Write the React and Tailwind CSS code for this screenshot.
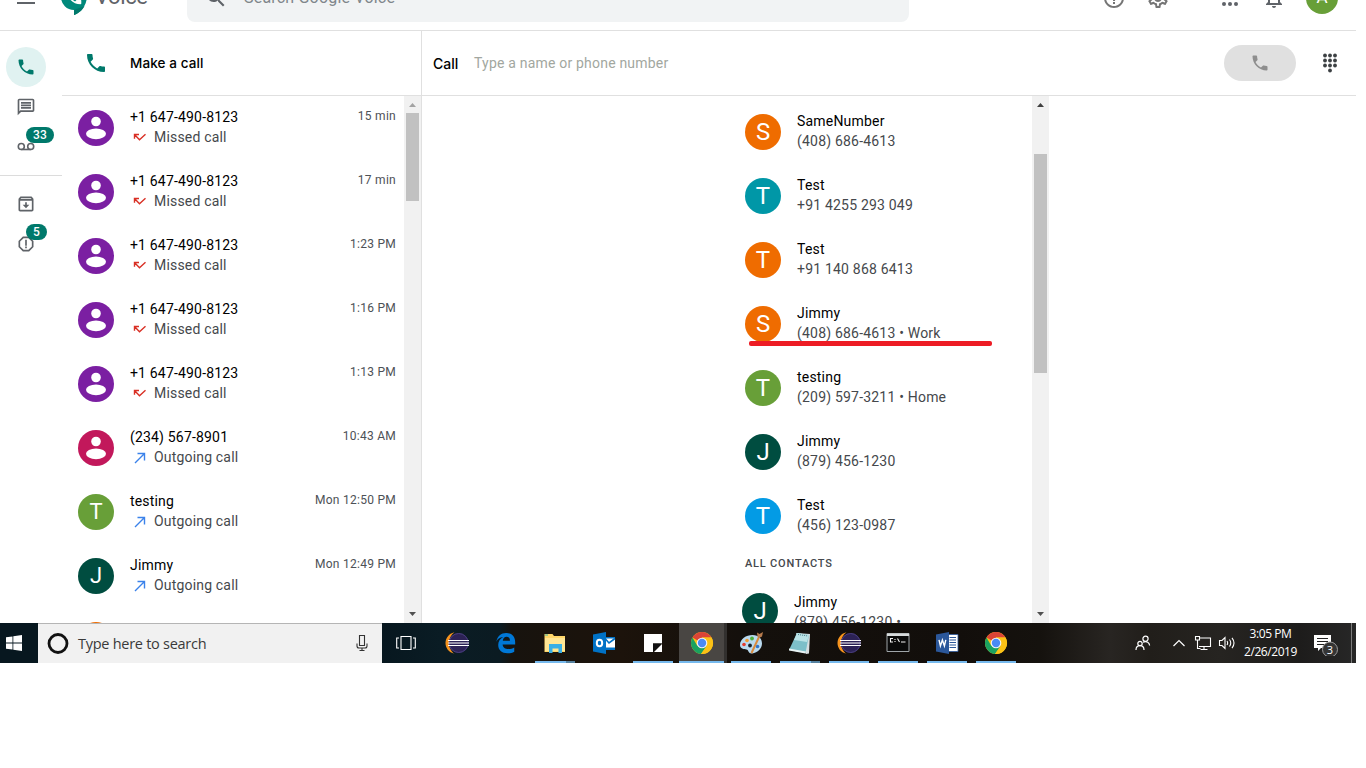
import React from "react";

const PHONE =
  "M6.62 10.79c1.44 2.83 3.76 5.14 6.59 6.59l2.2-2.2c.27-.27.67-.36 1.02-.24 1.12.37 2.33.57 3.57.57.55 0 1 .45 1 1V20c0 .55-.45 1-1 1-9.39 0-17-7.61-17-17 0-.55.45-1 1-1h3.5c.55 0 1 .45 1 1 0 1.25.2 2.45.57 3.57.11.35.03.74-.25 1.02l-2.2 2.2z";
const PERSON_BUST = (
  <svg viewBox="0 0 36 36" className="size-9">
    <circle cx="18" cy="11.5" r="4.8" fill="#fff" />
    <ellipse cx="18" cy="23.8" rx="10" ry="5.4" fill="#fff" />
  </svg>
);

function Icon({ d, className }) {
  return (
    <svg viewBox="0 0 24 24" fill="currentColor" className={className}>
      <path d={d} />
    </svg>
  );
}

const calls = [
  { name: "+1 647-490-8123", kind: "missed", time: "15 min", color: "bg-[#7b1fa2]" },
  { name: "+1 647-490-8123", kind: "missed", time: "17 min", color: "bg-[#7b1fa2]" },
  { name: "+1 647-490-8123", kind: "missed", time: "1:23 PM", color: "bg-[#7b1fa2]" },
  { name: "+1 647-490-8123", kind: "missed", time: "1:16 PM", color: "bg-[#7b1fa2]" },
  { name: "+1 647-490-8123", kind: "missed", time: "1:13 PM", color: "bg-[#7b1fa2]" },
  { name: "(234) 567-8901", kind: "out", time: "10:43 AM", color: "bg-[#c2185b]" },
  { name: "testing", letter: "T", kind: "out", time: "Mon 12:50 PM", color: "bg-[#689f38]" },
  { name: "Jimmy", letter: "J", kind: "out", time: "Mon 12:49 PM", color: "bg-[#004d40]" },
];

const contacts = [
  { name: "SameNumber", phone: "(408) 686-4613", letter: "S", color: "bg-[#ef6c00]" },
  { name: "Test", phone: "+91 4255 293 049", letter: "T", color: "bg-[#0097a7]" },
  { name: "Test", phone: "+91 140 868 6413", letter: "T", color: "bg-[#ef6c00]" },
  { name: "Jimmy", phone: "(408) 686-4613 • Work", letter: "S", color: "bg-[#ef6c00]", marked: true },
  { name: "testing", phone: "(209) 597-3211 • Home", letter: "T", color: "bg-[#689f38]" },
  { name: "Jimmy", phone: "(879) 456-1230", letter: "J", color: "bg-[#004d40]" },
  { name: "Test", phone: "(456) 123-0987", letter: "T", color: "bg-[#039be5]" },
];

function Header() {
  return (
    <header className="h-[31px] shrink-0 overflow-hidden border-b border-[#e0e0e0]">
      <div className="-mt-[34px] flex h-16 items-center">
        <Icon d="M3 18h18v-2H3v2zm0-5h18v-2H3v2zm0-7v2h18V6H3z" className="ml-[14px] size-6 text-[#5f6368]" />
        <svg viewBox="0 0 28 34" className="mt-[2px] ml-[22px] h-[34px] w-7">
          <path d="M14 2a13 13 0 1 0 0 26v5c5-2 12-7 13-18A13 13 0 0 0 14 2z" fill="#00897b" />
          <path d="M14 28v5c4-1.500 8-4 10.500-9z" fill="#00796b" />
          <g transform="translate(4.500 5.500) scale(.8)">
            <path d={PHONE} fill="#fff" />
          </g>
        </svg>
        <span className="-mt-[2px] ml-[7px] w-[92px] text-[22px] leading-none tracking-[-0.4px] text-[#5f6368]">Voice</span>
        <div className="flex h-12 w-[722px] items-center rounded-lg bg-[#f1f3f4] pl-[17px]">
          <Icon
            d="M15.5 14h-.79l-.28-.27A6.471 6.471 0 0 0 16 9.500 6.500 6.500 0 1 0 9.500 16c1.610 0 3.090-.59 4.230-1.570l.27.28v.79l5 4.990L20.490 19l-4.990-5zm-6 0C7.010 14 5 11.990 5 9.500S7.010 5 9.500 5 14 7.010 14 9.500 11.990 14 9.500 14z"
            className="size-6 text-[#5f6368]"
          />
          <span className="ml-4 text-[16px] tracking-[0.2px] text-[#80868b]">Search Google Voice</span>
        </div>
        <Icon
          d="M11 18h2v-2h-2v2zm1-16C6.480 2 2 6.480 2 12s4.480 10 10 10 10-4.480 10-10S17.520 2 12 2zm0 18c-4.410 0-8-3.590-8-8s3.590-8 8-8 8 3.590 8 8-3.590 8-8 8zm0-14c-2.210 0-4 1.790-4 4h2c0-1.100.9-2 2-2s2 .9 2 2c0 2-3 1.750-3 5h2c0-2.250 3-2.500 3-5 0-2.210-1.790-4-4-4z"
          className="ml-[193px] size-6 text-[#757575]"
        />
        <Icon
          d="M19.430 12.980c.04-.32.07-.64.07-.98 0-.34-.03-.66-.07-.98l2.110-1.650c.19-.15.24-.42.12-.64l-2-3.460c-.09-.16-.26-.25-.44-.25-.06 0-.12.01-.17.03l-2.490 1c-.52-.4-1.080-.73-1.690-.98l-.38-2.650C14.460 2.180 14.250 2 14 2h-4c-.25 0-.46.18-.49.42l-.38 2.650c-.61.25-1.170.59-1.690.98l-2.490-1c-.06-.02-.12-.03-.18-.03-.17 0-.34.09-.43.25l-2 3.460c-.13.22-.07.49.12.64l2.110 1.650c-.04.32-.07.65-.07.98 0 .33.03.66.07.98l-2.110 1.650c-.19.15-.24.42-.12.64l2 3.460c.09.16.26.25.44.25.06 0 .12-.01.17-.03l2.490-1c.52.4 1.080.73 1.690.98l.38 2.650c.03.24.24.42.49.42h4c.25 0 .46-.18.49-.42l.38-2.650c.61-.25 1.170-.59 1.690-.98l2.490 1c.06.02.12.03.18.03.17 0 .34-.09.43-.25l2-3.460c.12-.22.07-.49-.12-.64l-2.110-1.650zm-1.980-1.710c.04.31.05.52.05.73 0 .21-.02.43-.05.73l-.14 1.130.89.7 1.080.84-.7 1.210-1.270-.51-1.040-.42-.9.68c-.43.32-.84.56-1.250.73l-1.060.43-.16 1.130-.2 1.350h-1.400l-.19-1.350-.16-1.130-1.060-.43c-.43-.18-.83-.41-1.230-.71l-.91-.7-1.060.43-1.270.51-.7-1.210 1.080-.84.89-.7-.14-1.130c-.03-.31-.05-.54-.05-.74s.02-.43.05-.73l.14-1.130-.89-.7-1.080-.84.7-1.210 1.270.51 1.040.42.9-.68c.43-.32.84-.56 1.250-.73l1.060-.43.16-1.130.2-1.350h1.390l.19 1.350.16 1.130 1.060.43c.43.18.83.41 1.230.71l.91.7 1.060-.43 1.270-.51.7 1.210-1.070.85-.89.7.14 1.130zM12 8c-2.210 0-4 1.790-4 4s1.790 4 4 4 4-1.790 4-4-1.790-4-4-4zm0 6c-1.100 0-2-.9-2-2s.9-2 2-2 2 .9 2 2-.9 2-2 2z"
          className="ml-5 size-6 text-[#757575]"
        />
        <svg viewBox="0 0 24 24" fill="#5f6368" className="ml-12 size-6">
          {[6, 12, 18].map((y) => [6, 12, 18].map((x) => <circle key={x + "-" + y} cx={x} cy={y} r="2" />))}
        </svg>
        <Icon
          d="M12 22c1.100 0 2-.9 2-2h-4c0 1.100.9 2 2 2zm6-6v-5c0-3.070-1.630-5.640-4.500-6.320V4c0-.83-.67-1.500-1.500-1.500s-1.500.67-1.500 1.500v.68C7.640 5.360 6 7.920 6 11v5l-2 2v1h16v-1l-2-2zm-2 1H8v-6c0-2.480 1.510-4.500 4-4.500s4 2.020 4 4.500v6z"
          className="ml-5 size-6 text-[#5f6368]"
        />
        <div className="ml-5 flex size-8 items-center justify-center rounded-full bg-[#689f38] text-[17px] text-white">A</div>
      </div>
    </header>
  );
}

function Badge({ children }) {
  return (
    <span className="absolute top-0 left-[26px] flex h-4 items-center rounded-full bg-[#00796b] px-[7px] text-[12px] font-medium tracking-[0.1px] text-white">
      {children}
    </span>
  );
}

function Sidebar() {
  return (
    <nav className="flex w-[62px] shrink-0 flex-col pt-4 text-[#5f6368]">
      <div className="ml-[6px] flex size-10 items-center justify-center rounded-full bg-[#e0f2f1]">
        <Icon d={PHONE} className="size-5 text-[#00796b]" />
      </div>
      <div className="ml-[6px] flex size-10 items-center justify-center">
        <Icon
          d="M4 4h16v12H5.170L4 17.170V4m0-2c-1.100 0-1.990.9-1.990 2L2 22l4-4h14c1.100 0 2-.9 2-2V4c0-1.100-.9-2-2-2H4zm2 10h12v2H6v-2zm0-3h12v2H6V9zm0-3h12v2H6V6z"
          className="size-5"
        />
      </div>
      <div className="relative flex h-10 items-center pl-4">
        <svg viewBox="0 0 20 20" className="size-5" fill="none" stroke="currentColor" strokeWidth="1.600">
          <circle cx="5.300" cy="9.500" r="3" />
          <circle cx="14.700" cy="9.500" r="3" />
          <path d="M5.300 12.500h9.400" />
        </svg>
        <Badge>33</Badge>
      </div>
      <div className="mt-2 mb-2 h-px bg-[#dcdcdc]" />
      <div className="ml-[6px] flex size-10 items-center justify-center">
        <Icon
          d="M20.540 5.230l-1.390-1.680C18.880 3.210 18.470 3 18 3H6c-.47 0-.88.21-1.160.55L3.460 5.230C3.170 5.570 3 6.020 3 6.500V19c0 1.100.9 2 2 2h14c1.100 0 2-.9 2-2V6.500c0-.48-.17-.93-.46-1.270zM6.240 5h11.520l.83 1H5.420l.82-1zM5 19V8h14v11H5zm8-9h-2v3H8l4 4 4-4h-3z"
          className="size-5"
        />
      </div>
      <div className="relative flex h-10 items-center pl-4">
        <Icon
          d="M15.730 3H8.270L3 8.270v7.460L8.270 21h7.460L21 15.730V8.270L15.730 3zM19 14.900L14.900 19H9.100L5 14.900V9.100L9.100 5h5.800L19 9.100v5.800zM11 7h2v7h-2zM11 15h2v2h-2z"
          className="size-5"
        />
        <Badge>5</Badge>
      </div>
    </nav>
  );
}

function Scrollbar({ thumb, upColor }) {
  return (
    <div className="flex w-[17px] shrink-0 flex-col items-center bg-[#f1f1f1]">
      <svg viewBox="0 0 17 17" className="size-[17px] shrink-0">
        <path d="M5 11h7L8.500 7z" className={upColor} />
      </svg>
      <div className={thumb} />
      <svg viewBox="0 0 17 17" className="mt-auto size-[17px] shrink-0">
        <path d="M5 6h7L8.500 10z" fill="#505050" />
      </svg>
    </div>
  );
}

function Avatar({ color, letter, size = "text-[24px]" }) {
  return (
    <div className={`flex size-9 shrink-0 items-center justify-center rounded-full leading-none text-white ${size} ${color}`}>
      {letter || PERSON_BUST}
    </div>
  );
}

function CallRow({ name, kind, time, color, letter }) {
  return (
    <div className="flex h-16 shrink-0 pl-4 pr-2">
      <div className="mt-[14px]">
        <Avatar color={color} letter={letter} size="text-[22px]" />
      </div>
      <div className="ml-4 pt-[11px] text-[14px] leading-5 tracking-[0.18px]">
        <div className="text-black">{name}</div>
        <div className="flex items-center text-[#45484c]">
          {kind === "missed" ? (
            <svg viewBox="0 0 16 16" className="mt-[2px] mr-[6px] ml-[2px] size-4" fill="none" stroke="#d93025" strokeWidth="1.400">
              <path d="M2.500 8.800V4.500H7M2.700 4.700L7.500 9.800L13.500 4.300" />
            </svg>
          ) : (
            <svg viewBox="0 0 16 16" className="mt-[1px] mr-[6px] ml-[2px] size-4" fill="none" stroke="#3b82ea" strokeWidth="1.400">
              <path d="M5.500 3.500H12.500V10.500M12.500 3.500L3 13" />
            </svg>
          )}
          {kind === "missed" ? "Missed call" : "Outgoing call"}
        </div>
      </div>
      <div className="ml-auto pt-[10px] text-[12px] leading-5 tracking-[0.27px] text-[#4d5156]">{time}</div>
    </div>
  );
}

function ContactRow({ name, phone, color, letter, marked }) {
  return (
    <div className="relative flex h-16 shrink-0">
      <div className="mt-[14px]">
        <Avatar color={color} letter={letter} />
      </div>
      <div className="ml-4 pt-[11px] text-[14px] leading-5 tracking-[0.2px]">
        <div className="text-black">{name}</div>
        <div className="text-[#45484c]">{phone}</div>
      </div>
      {marked && <div className="absolute top-[49px] left-1 h-[5px] w-[243px] rounded-[2px] bg-[#ed1c24]" />}
    </div>
  );
}

function CallsPanel() {
  return (
    <section className="flex w-[360px] shrink-0 flex-col border-r border-[#e0e0e0]">
      <div className="flex h-[65px] shrink-0 items-center border-b border-[#e0e0e0] pl-[22px]">
        <Icon d={PHONE} className="size-6 text-[#00796b]" />
        <span className="ml-[22px] font-[Inter,sans-serif] text-[13.500px] leading-5 font-medium tracking-[0.1px] text-black">
          Make a call
        </span>
      </div>
      <div className="flex min-h-0 flex-1">
        <div className="flex flex-1 flex-col overflow-hidden">
          {calls.map((c, i) => (
            <CallRow key={i} {...c} />
          ))}
          <div className="mt-[14px] ml-4 size-9 shrink-0 rounded-full bg-[#ef6c00]" />
        </div>
        <Scrollbar thumb="h-[88px] w-[13px] bg-[#c1c1c1]" upColor="fill-[#a3a3a3]" />
      </div>
    </section>
  );
}

function DialPanel() {
  return (
    <section className="flex min-w-0 flex-1 flex-col">
      <div className="flex h-[65px] shrink-0 items-center border-b border-[#e0e0e0] pl-[11px]">
        <span className="w-[41px] font-[Inter,sans-serif] text-[14px] font-medium text-black">Call</span>
        <span className="text-[14px] tracking-[0.2px] text-[#a2a7a0]">Type a name or phone number</span>
        <div className="mr-[22px] ml-auto flex h-9 w-[72px] items-center justify-center rounded-full bg-[#e0e0e0]">
          <Icon d={PHONE} className="size-5 text-[#8e8e8e]" />
        </div>
        <svg viewBox="0 0 24 24" className="mr-[14px] size-6" fill="#3c4043">
          {[4.500, 9.500, 14.500].map((y) => [7, 12, 17].map((x) => <circle key={x + "-" + y} cx={x} cy={y} r="1.900" />))}
          <circle cx="12" cy="19.500" r="1.900" />
        </svg>
      </div>
      <div className="flex min-h-0 flex-1">
        <div className="ml-[320px] flex w-[290px] flex-col overflow-hidden pt-1">
          <div className="pl-[3px]">
            {contacts.map((c, i) => (
              <ContactRow key={i} {...c} />
            ))}
            <div className="h-[31px] pt-2 text-[11px] leading-4 font-medium tracking-[0.8px] text-[#45484c]">ALL CONTACTS</div>
          </div>
          <div className="flex h-16 shrink-0">
            <div className="mt-[14px]">
              <Avatar color="bg-[#004d40]" letter="J" />
            </div>
            <div className="ml-4 pt-[13px] text-[14px] leading-5 tracking-[0.2px]">
              <div className="text-black">Jimmy</div>
              <div className="text-[#45484c]">(879) 456-1230 •</div>
            </div>
          </div>
        </div>
        <Scrollbar thumb="mt-[41px] h-[219px] w-[13px] bg-[#c1c1c1]" upColor="fill-[#404040]" />
      </div>
    </section>
  );
}

const Eclipse = () => (
  <svg viewBox="0 0 24 24" className="size-6">
    <path d="M9.500 1.200C-2.500 4 -2.500 20 9.500 22.800C2.500 18.500 2.500 5.500 9.500 1.200z" fill="#f7941e" />
    <circle cx="13.700" cy="12" r="10" fill="#2c2255" />
    <circle cx="13.700" cy="12" r="9.500" fill="none" stroke="#4a3f80" strokeWidth="1" />
    <path d="M3 9.500h21M3 12h21M3 14.500h21" stroke="#fff" strokeWidth="1.200" />
  </svg>
);
const Edge = () => (
  <svg viewBox="0 0 24 24" className="size-[22px]">
    <path
      d="M1.500 10.500C2.500 4 7 0.800 12.500 1c6 .2 9.500 4.500 9.500 10v2.500H8.300c.2 3.500 3 5 6.200 5 2.500 0 4.700-.6 6.500-1.700v4.700c-2 1.200-4.700 1.800-7.500 1.800-6 0-10-3.500-10-9 0-4 2-7 5.500-8.800C5 6 2.800 7.500 1.500 10.500zM8.500 9.500h7.800c0-2.800-1.300-4.300-3.700-4.300-2.200 0-3.700 1.500-4.100 4.300z"
      fill="#0078d7"
    />
  </svg>
);
const Explorer = () => (
  <svg viewBox="0 0 24 24" className="size-6">
    <path d="M1.500 3h8l1.500 2h11v16h-20.500z" fill="#ffd76a" />
    <path d="M2 7h20v13H2z" fill="#ffe694" />
    <path d="M2 3.500h3v1H2z" fill="#38b2a4" />
    <path d="M6 13h13v9h-3.500v-4.500h-6V22H6z" fill="#38afe6" />
  </svg>
);
const Outlook = () => (
  <svg viewBox="0 0 24 24" className="size-6">
    <path d="M11 6h12v13H11z" fill="#0072c6" />
    <path d="M13.500 7.500H23v9h-9.500z" fill="#fff" />
    <path d="M13.500 8l3.500 4 6-4.500" fill="none" stroke="#0072c6" strokeWidth="1.600" />
    <path d="M1 3.500L14 1v22L1 20.500z" fill="#0072c6" />
    <ellipse cx="7.500" cy="12" rx="2.700" ry="3.300" fill="none" stroke="#fff" strokeWidth="2" />
  </svg>
);
const Sticky = () => (
  <svg viewBox="0 0 24 24" className="size-6">
    <path d="M3 3h18v9.500h-9V21H3z" fill="#fff" />
    <path d="M12 12.500h9L12 21z" fill="#111" />
    <path d="M21 13v8h-8z" fill="#fff" />
  </svg>
);
const Chrome = () => (
  <svg viewBox="0 0 24 24" className="size-6">
    <circle cx="12" cy="12" r="11" fill="#fbc116" />
    <path d="M12 12L2.470 6.500A11 11 0 0 1 21.500 6.500H12z" fill="#db4437" />
    <path d="M2.470 6.500A11 11 0 0 0 11 23L16.800 14.800 7.240 14.750z" fill="#1aa260" />
    <path d="M21.500 6.500H12v5.500l4.760 2.750L11 23A11 11 0 0 0 21.500 6.500z" fill="#fbc116" />
    <circle cx="12" cy="12" r="5.300" fill="#f5f5f5" />
    <circle cx="12" cy="12" r="4.200" fill="#4a8af4" />
  </svg>
);
const Paint = () => (
  <svg viewBox="0 0 24 24" className="size-6">
    <path d="M1 14C1 8 7 4 13.500 4S23 8 23 12.500 19 22 13 22.500c-4 .3-3-3.500-5.500-4S1 18 1 14z" fill="#b9d9ee" />
    <circle cx="5" cy="13.500" r="1.800" fill="#e23b2e" />
    <circle cx="8" cy="9.500" r="1.800" fill="#f29a2e" />
    <circle cx="13" cy="7.500" r="1.900" fill="#4caf3d" />
    <circle cx="11" cy="14.500" r="1.900" fill="#16202a" />
    <circle cx="18.500" cy="15.500" r="1.800" fill="#2f74c9" />
    <path d="M12.500 22L20 6" stroke="#d98a3d" strokeWidth="2" />
    <path d="M18.500 5.500L18 1.500l2.500 1.500L24 1l-1 4.500-3 1.500z" fill="#b77b4d" />
  </svg>
);
const Notepad = () => (
  <svg viewBox="0 0 24 24" className="size-6">
    <path d="M8 2l14 1-1 19.500-3 .5z" fill="#d6dde0" />
    <path d="M9 2l12 2-3.500 18L1 19z" fill="#7dbfc9" />
    <path d="M9 2l12 2-2 7-13-2z" fill="#b9e2e6" />
    <path d="M1 17.500L17.800 20.500l-.3 2L1 19.500z" fill="#e9f3f4" />
    <path d="M10 3.500l10 1.500" stroke="#4b7e88" strokeWidth="1" strokeDasharray="1 1" />
  </svg>
);
const Cmd = () => (
  <svg viewBox="0 0 24 24" className="size-6">
    <path d="M1 2.500h22v18H1z" fill="#0a0a0a" stroke="#9fa5a8" strokeWidth="1" />
    <path d="M1 2.500h22v2.500H1z" fill="#d7dadb" />
    <path d="M7 7.500H4.500v3.500H7M9 8v1M9 10v1M11.500 7.500l2 3.500M15 11h4.500" fill="none" stroke="#f2f2f2" strokeWidth="1.100" />
  </svg>
);
const Word = () => (
  <svg viewBox="0 0 24 24" className="size-6">
    <path d="M12 3.500h11v17H12z" fill="#fff" stroke="#2b579a" strokeWidth=".8" />
    <path d="M14.500 6.500H21M14.500 9H21M14.500 11.500H21M14.500 14H21M14.500 16.500H21" stroke="#2b579a" strokeWidth="1.100" />
    <path d="M1 3.500L14 1v22L1 20.500z" fill="#2b579a" />
    <path d="M4 8.800l1.400 6.200 2-6 2 6 1.400-6.200" fill="none" stroke="#fff" strokeWidth="1.400" />
  </svg>
);

const apps = [
  { icon: Eclipse },
  { icon: Edge },
  { icon: Explorer, open: true, stacked: true },
  { icon: Outlook },
  { icon: Sticky, open: true },
  { icon: Chrome, active: true },
  { icon: Paint, open: true },
  { icon: Notepad, open: true, stacked: true },
  { icon: Eclipse, open: true },
  { icon: Cmd, open: true },
  { icon: Word, open: true },
  { icon: Chrome, open: true },
];

function TaskButton({ icon: Glyph, open, active, stacked }) {
  return (
    <div className="flex w-[49px] shrink-0 justify-center">
      <div
        className={`flex h-10 shrink-0 flex-col items-center ${active ? "ml-[2px] w-12 border-r-[3px] border-[#32302e] bg-[#494643]" : "w-10"}`}
      >
        <div className={`flex flex-1 items-center pt-[2px] ${active ? "pl-[2px]" : ""}`}>
          <Glyph />
        </div>
        <div className="flex h-[2px] w-full">
          {(open || active) && <div className="flex-1 bg-[#76b9ed]" />}
          {stacked && <div className="w-[9px] bg-[#55819f]" />}
        </div>
      </div>
    </div>
  );
}

function Taskbar() {
  return (
    <footer className="flex h-10 shrink-0 bg-[linear-gradient(90deg,#07171f_0px,#07171f_382px,#0a1c24_440px,#0b1b22_500px,#17130e_512px,#1c130b_620px,#14100c_740px,#120e0b_960px,#15120e_1040px,#282522_1110px,#211e1a_1150px,#262421_1220px,#1d1c1b_1300px,#272727_1356px)] font-['Open_Sans','Noto_Sans',sans-serif]">
      <div className="flex w-[38px] items-center pl-[6px]">
        <svg viewBox="0 0 16 16" className="size-4" fill="#fff">
          <path d="M0 2.300L6.500 1.400V7.600H0zM7.300 1.300L16 0V7.600H7.300zM0 8.400H6.500V14.600L0 13.700zM7.300 8.400H16V16L7.300 14.700z" />
        </svg>
      </div>
      <div className="flex w-[344px] items-center border-t border-[#b5b5b5] bg-[#f1f1f1] pl-[9px]">
        <svg viewBox="0 0 22 22" className="size-[22px]">
          <circle cx="11" cy="10.500" r="9" fill="none" stroke="#111" strokeWidth="2.800" />
        </svg>
        <span className="ml-[9px] text-[14.500px] tracking-[-0.270px] text-[#3a3a3a]">Type here to search</span>
        <svg viewBox="0 0 12 18" className="mr-[14px] mb-[1px] ml-auto h-[18px] w-3" fill="none" stroke="#333" strokeWidth="1.100">
          <path d="M3.500 1.500h5v10h-5zM1 9.500v2.500q0 2 2 2h6q2 0 2-2V9.500M6 14v2.500M3.500 16.500h5" />
        </svg>
      </div>
      <div className="flex w-[50px] items-center pl-[14px]">
        <svg viewBox="0 0 20 16" className="h-4 w-5" fill="none" stroke="#fff" strokeWidth="1.100">
          <path d="M5 1.500h10v13H5zM3 3H.7v10H3M17 3h2.300v10H17" />
        </svg>
      </div>
      {apps.map((a, i) => (
        <TaskButton key={i} {...a} />
      ))}
      <div className="ml-auto flex items-center text-white">
        <svg viewBox="0 0 16 16" className="size-4" fill="none" stroke="#fff" strokeWidth="1.200">
          <circle cx="10.500" cy="3.800" r="2.600" />
          <circle cx="5" cy="8.500" r="2.200" />
          <path d="M1 15q0-4.300 4-4.300t4 4.300M8 7.200q2.500-1.200 4.800 0 1.800 1.200 1.800 3.300" />
        </svg>
        <svg viewBox="0 0 14 10" className="ml-[21px] h-[10px] w-[14px]" fill="none" stroke="#fff" strokeWidth="1.200">
          <path d="M1.500 8L7 2.500 12.500 8" />
        </svg>
        <svg viewBox="0 0 18 16" className="ml-2 h-4 w-[18px]" fill="none" stroke="#fff" strokeWidth="1.100">
          <path d="M5.500 3H16.500V11.500H5M1.500 1.500h4v3.500h-4zM3.500 5v8.500h3M10 11.500v2.500M6.500 14.500h7" />
        </svg>
        <svg viewBox="0 0 18 16" className="ml-[6px] h-4 w-[18px]" fill="none" stroke="#fff" strokeWidth="1.100">
          <path d="M1.500 5.500H4L7 2.500V13.500L4 10.500H1.500zM9 6q1.300 2 0 4M11.500 4.500q2.500 3.500 0 7M14 2.800q4 5.200 0 10.400" />
        </svg>
        <div className="ml-[6px] w-[57px] text-center text-[12px] leading-[18px] tracking-[-0.430px] whitespace-nowrap">
          <div>3:05 PM</div>
          <div>2/26/2019</div>
        </div>
        <svg viewBox="0 0 26 26" className="ml-[14px] size-[26px]">
          <path d="M1 5h17v13H8l-3 3v-3H1z" fill="#fff" />
          <path d="M4 8.500h11M4 11.500h11M4 14.500h8" stroke="#222" strokeWidth="1.200" />
          <circle cx="17" cy="19.500" r="7.500" fill="#353535" stroke="#9a9a9a" strokeWidth="1" />
          <text x="17" y="23.500" textAnchor="middle" fontSize="11" fill="#fff">
            3
          </text>
        </svg>
        <div className="ml-[12px] h-10 w-[5px] border-l border-[#7b7b7b]" />
      </div>
    </footer>
  );
}

export default function App() {
  return (
    <div className="h-[768px] w-[1366px] overflow-hidden bg-white font-[Roboto,sans-serif]">
      <div className="flex h-[663px] w-[1356px] flex-col">
        <Header />
        <main className="flex min-h-0 flex-1">
          <Sidebar />
          <CallsPanel />
          <DialPanel />
        </main>
        <Taskbar />
      </div>
    </div>
  );
}
